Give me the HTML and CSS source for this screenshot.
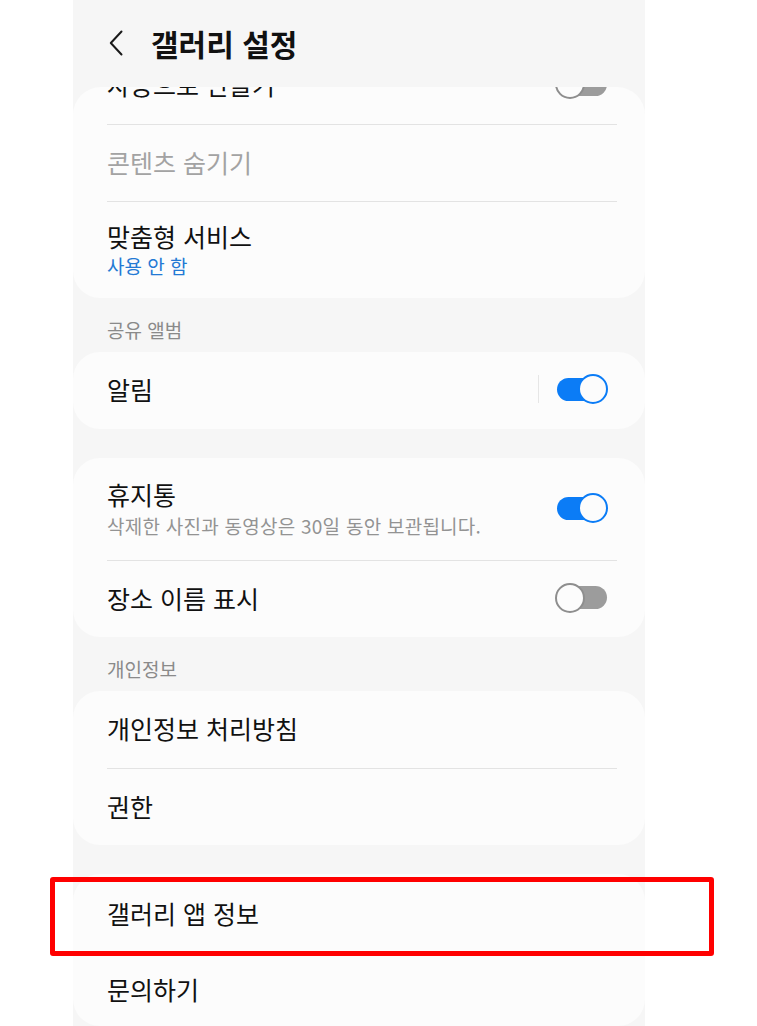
FILE: index.html
```html
<!DOCTYPE html>
<html lang="ko">
<head>
<meta charset="utf-8">
<title>갤러리 설정</title>
<link rel="stylesheet" href="styles.css">
</head>
<body>
<div class="stage">
  <div class="phone">
    <header class="appbar">
      <svg class="back" width="14" height="26" viewBox="0 0 14 26" aria-hidden="true">
        <polyline points="12.5,1.5 1.8,13 12.5,24.5" fill="none" stroke="#1a1a1a" stroke-width="2" stroke-linecap="round" stroke-linejoin="round"/>
      </svg>
      <h1 class="title">갤러리 설정</h1>
    </header>
    <div class="viewport">
      <div class="scroll">
        <section class="card">
          <div class="row">
            <span class="label">자동으로 만들기</span>
            <span class="toggle off"><span class="knob"></span></span>
          </div>
          <div class="row">
            <span class="label disabled">콘텐츠 숨기기</span>
          </div>
          <div class="row row-two">
            <div class="text">
              <span class="label">맞춤형 서비스</span>
              <span class="sub blue">사용 안 함</span>
            </div>
          </div>
        </section>

        <div class="section-title">공유 앨범</div>
        <section class="card">
          <div class="row">
            <span class="label">알림</span>
            <span class="vsep"></span>
            <span class="toggle on"><span class="knob"></span></span>
          </div>
        </section>

        <div class="gap"></div>
        <section class="card">
          <div class="row row-tall">
            <div class="text">
              <span class="label">휴지통</span>
              <span class="sub gray">삭제한 사진과 동영상은 30일 동안 보관됩니다.</span>
            </div>
            <span class="toggle on"><span class="knob"></span></span>
          </div>
          <div class="row">
            <span class="label">장소 이름 표시</span>
            <span class="toggle off"><span class="knob"></span></span>
          </div>
        </section>

        <div class="section-title">개인정보</div>
        <section class="card">
          <div class="row">
            <span class="label">개인정보 처리방침</span>
          </div>
          <div class="row">
            <span class="label">권한</span>
          </div>
        </section>

        <div class="gap"></div>
        <section class="card">
          <div class="row row-first">
            <span class="label">갤러리 앱 정보</span>
          </div>
          <div class="row row-last">
            <span class="label">문의하기</span>
          </div>
        </section>
      </div>
    </div>
  </div>
  <div class="highlight"></div>
</div>
</body>
</html>
```

FILE: styles.css
```css
* { box-sizing: border-box; }

html, body {
  margin: 0;
  padding: 0;
  background: #ffffff;
}

body {
  font-family: "Noto Sans CJK KR", "Noto Sans", "Liberation Sans", sans-serif;
  color: #111111;
}

.stage {
  position: relative;
  width: 757px;
  height: 1026px;
  overflow: hidden;
}

.phone {
  margin-left: 73px;
  width: 572px;
  height: 1026px;
  background: #f6f6f6;
  display: flex;
  flex-direction: column;
  overflow: hidden;
}

.appbar {
  height: 87px;
  flex: 0 0 87px;
  display: flex;
  align-items: center;
  padding-left: 36px;
  padding-bottom: 1px;
}

.back {
  display: block;
  flex: 0 0 auto;
}

.title {
  margin: 0 0 0 28px;
  font-size: 30px;
  font-weight: 700;
  line-height: 38px;
  color: #111111;
}

.viewport {
  flex: 1 1 auto;
  overflow: hidden;
  border-radius: 28px 28px 0 0;
}

.scroll {
  margin-top: -40px;
}

.card {
  background: #fcfcfc;
  border-radius: 27px;
}

.row {
  height: 77px;
  margin: 0 28px 0 34px;
  padding-bottom: 3px;
  display: flex;
  align-items: center;
}

.row + .row {
  border-top: 1px solid #e3e3e3;
}

.row-two { height: 97px; padding-bottom: 2px; }
.row-tall { height: 102px; padding-bottom: 2px; }
.row-first { height: 80px; }
.row-last { height: 72px; padding-bottom: 4px; }

.text {
  display: flex;
  flex-direction: column;
  flex: 1 1 auto;
}

.label {
  flex: 1 1 auto;
  font-size: 25px;
  line-height: 32px;
  font-weight: 400;
  color: #111111;
}

.label.disabled {
  color: #a3a3a3;
}

.sub {
  font-size: 19px;
  line-height: 25px;
  margin-top: 1px;
}

.row-tall .sub { margin-top: 3px; }

.sub.blue { color: #2379d4; }
.sub.gray { color: #939393; letter-spacing: 0.25px; }

.section-title {
  height: 54px;
  padding: 19px 0 0 34px;
  font-size: 19px;
  line-height: 26px;
  color: #8a8a8a;
}

.gap {
  height: 29px;
}

.vsep {
  flex: 0 0 1px;
  width: 1px;
  height: 28px;
  background: #e6e6e6;
  margin-right: 18px;
}

.toggle {
  flex: 0 0 50px;
  width: 50px;
  height: 23px;
  border-radius: 12px;
  display: flex;
  align-items: center;
  margin-right: 10px;
}

.knob {
  width: 30px;
  height: 30px;
  border-radius: 50%;
  background: #fcfcfc;
  flex: 0 0 30px;
}

.toggle.on {
  background: #0b7cf6;
}

.toggle.on .knob {
  margin-left: auto;
  margin-right: -1px;
  border: 2px solid #0b7cf6;
}

.toggle.off {
  background: #9c9c9c;
}

.toggle.off .knob {
  margin-left: -2px;
  border: 2px solid #8e8e8e;
}

.highlight {
  position: absolute;
  left: 50px;
  top: 877px;
  width: 664px;
  height: 79px;
  border: 5px solid #ff0000;
  border-radius: 3px;
}
```
